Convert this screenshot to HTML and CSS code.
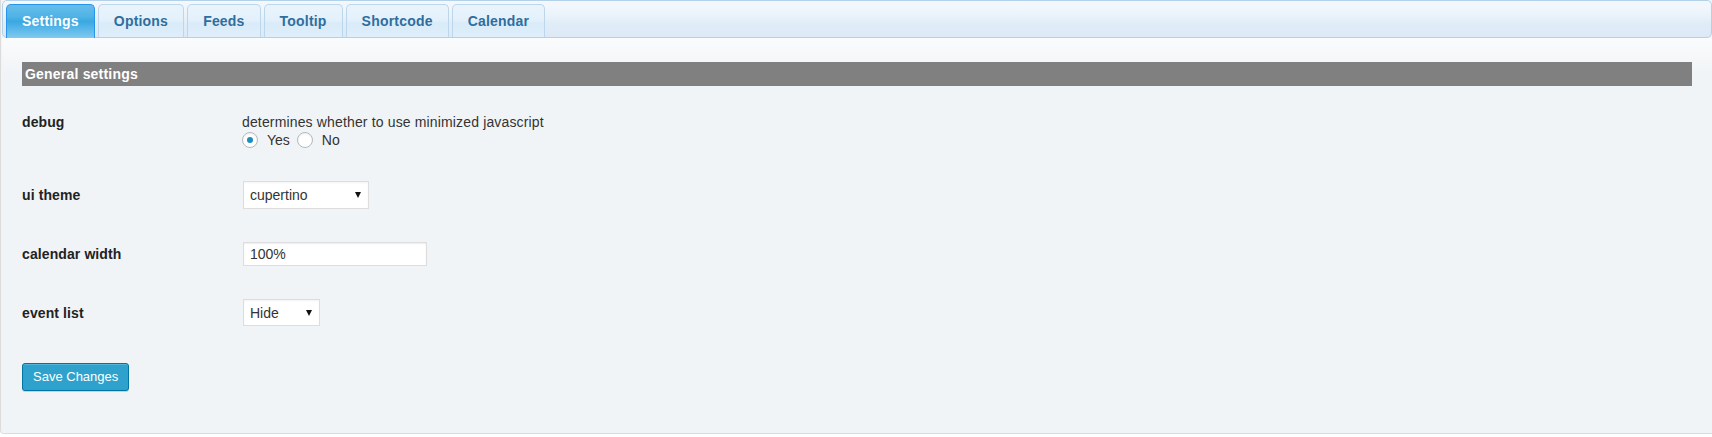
FILE: index.html
```html
<!DOCTYPE html>
<html lang="en">
<head>
<meta charset="utf-8">
<title>Settings</title>
<link rel="stylesheet" href="styles.css">
</head>
<body>
<div class="tabs">
  <ul class="tab-nav">
    <li class="tab active">Settings</li>
    <li class="tab">Options</li>
    <li class="tab">Feeds</li>
    <li class="tab">Tooltip</li>
    <li class="tab">Shortcode</li>
    <li class="tab">Calendar</li>
  </ul>
  <div class="panel">
    <h3 class="section-bar">General settings</h3>

    <div class="form-row row-top">
      <div class="label">debug</div>
      <div class="field">
        <div class="desc">determines whether to use minimized javascript</div>
        <div class="radios">
          <label class="radio-label"><input type="radio" name="debug" class="radio" checked>Yes</label>
          <label class="radio-label"><input type="radio" name="debug" class="radio">No</label>
        </div>
      </div>
    </div>

    <div class="form-row row-theme">
      <div class="label">ui theme</div>
      <div class="field">
        <span class="select-wrap select-theme"><select class="select"><option>cupertino</option></select></span>
      </div>
    </div>

    <div class="form-row row-width">
      <div class="label">calendar width</div>
      <div class="field">
        <input type="text" class="text-input" value="100%">
      </div>
    </div>

    <div class="form-row row-list">
      <div class="label">event list</div>
      <div class="field">
        <span class="select-wrap select-list"><select class="select"><option>Hide</option></select></span>
      </div>
    </div>

    <div class="actions">
      <button class="button-primary" type="button">Save Changes</button>
    </div>
  </div>
</div>
</body>
</html>
```

FILE: styles.css
```css
html, body {
  margin: 0;
  padding: 0;
  background: #ffffff;
}

body {
  font-family: "Liberation Sans", Arial, sans-serif;
  font-size: 14px;
  color: #333333;
}

.tabs {
  border-left: 1px solid #dcdcdc;
  border-bottom: 1px solid #dcdcdc;
  border-bottom-left-radius: 4px;
  padding-left: 1px;
  background: #f1f4f7;
}

.tab-nav {
  list-style: none;
  margin: 0;
  padding: 3px 0 0 3px;
  height: 33px;
  display: flex;
  gap: 3px;
  border: 1px solid #b3d2ea;
  border-radius: 5px;
  background: linear-gradient(#f4f8fd 0%, #ecf4fb 35%, #e0edf8 60%, #dde9f6 100%);
}

.tab {
  height: 32px;
  line-height: 32px;
  padding: 0 15px;
  border: 1px solid #bcd6ec;
  border-bottom: none;
  border-radius: 5px 5px 0 0;
  background: linear-gradient(#e9f4fd 0%, #e3f0fb 50%, #d9ebf9 56%, #dfeefa 100%);
  color: #2e6e9e;
  font-weight: bold;
  font-size: 14px;
  letter-spacing: 0.2px;
}

.tab.active {
  height: 33px;
  margin-bottom: -1px;
  border-color: #2694e8;
  background: linear-gradient(#66bdea 0%, #50b3e6 35%, #3aa8e2 50%, #5cb9e9 75%, #80caef 100%);
  color: #ffffff;
}

.panel {
  background: linear-gradient(#fafbfc 0px, #f1f4f7 36px);
  padding: 24px 20px 42px 20px;
}

.section-bar {
  margin: 0;
  height: 24px;
  line-height: 24px;
  padding-left: 3px;
  background: #808080;
  color: #ffffff;
  font-size: 14px;
  font-weight: bold;
  letter-spacing: 0.2px;
}

.form-row {
  display: flex;
  align-items: center;
}

.row-top {
  align-items: flex-start;
  margin-top: 27px;
}

.row-theme {
  margin-top: 32px;
}

.row-width {
  margin-top: 33px;
}

.row-list {
  margin-top: 33px;
}

.label {
  width: 220px;
  flex: none;
  font-weight: bold;
  color: #222222;
  line-height: 18px;
  letter-spacing: 0.1px;
}

.field {
  line-height: 18px;
}

.desc {
  color: #333333;
  letter-spacing: 0.15px;
}

.radios {
  display: flex;
  align-items: center;
  height: 18px;
}

.radio-label {
  display: flex;
  align-items: center;
  margin-right: 7px;
  color: #333333;
}

.radio {
  appearance: none;
  -webkit-appearance: none;
  width: 16px;
  height: 16px;
  margin: 0 9px 0 0;
  border: 1px solid #b4b9be;
  border-radius: 50%;
  background: #ffffff;
  box-shadow: inset 0 1px 2px rgba(0, 0, 0, 0.07);
  display: flex;
  align-items: center;
  justify-content: center;
}

.radio:checked::before {
  content: "";
  width: 6px;
  height: 6px;
  border-radius: 50%;
  background: #1e8cbe;
}

.select-wrap {
  position: relative;
  display: inline-block;
  margin-left: 1px;
}

.select-wrap::after {
  content: "";
  position: absolute;
  top: 50%;
  right: 8px;
  margin-top: -3px;
  border-left: 3px solid transparent;
  border-right: 3px solid transparent;
  border-top: 6px solid #111111;
  pointer-events: none;
}

.select {
  appearance: none;
  -webkit-appearance: none;
  display: block;
  height: 28px;
  padding: 0 6px;
  border: 1px solid #dddddd;
  border-radius: 0;
  background: #ffffff;
  box-shadow: inset 0 1px 2px rgba(0, 0, 0, 0.05);
  font-family: "Liberation Sans", Arial, sans-serif;
  font-size: 14px;
  color: #333333;
}

.select-theme .select {
  width: 126px;
}

.select-list .select {
  width: 77px;
  height: 27px;
}

.text-input {
  display: block;
  box-sizing: border-box;
  width: 184px;
  height: 24px;
  margin-left: 1px;
  padding: 0 6px;
  border: 1px solid #dddddd;
  background: #ffffff;
  box-shadow: inset 0 1px 2px rgba(0, 0, 0, 0.07);
  font-family: "Liberation Sans", Arial, sans-serif;
  font-size: 14px;
  color: #333333;
}

.actions {
  margin-top: 37px;
}

.button-primary {
  box-sizing: border-box;
  height: 28px;
  padding: 0 10px;
  border: 1px solid #0074a2;
  border-radius: 3px;
  background: #2ea2cc;
  box-shadow: inset 0 1px 0 rgba(120, 200, 230, 0.5), 0 1px 0 rgba(0, 0, 0, 0.15);
  color: #ffffff;
  font-family: "Liberation Sans", Arial, sans-serif;
  font-size: 13px;
  line-height: 26px;
  cursor: pointer;
}
```
